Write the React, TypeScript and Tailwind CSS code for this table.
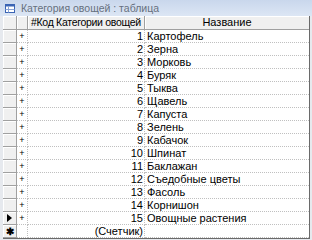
import React from "react";

const rows: [number, string][] = [
  [1, "Картофель"],
  [2, "Зерна"],
  [3, "Морковь"],
  [4, "Буряк"],
  [5, "Тыква"],
  [6, "Щавель"],
  [7, "Капуста"],
  [8, "Зелень"],
  [9, "Кабачок"],
  [10, "Шпинат"],
  [11, "Баклажан"],
  [12, "Съедобные цветы"],
  [13, "Фасоль"],
  [14, "Корнишон"],
  [15, "Овощные растения"],
];

const selector =
  "h-[13px] bg-[#f0f0f0] border-r border-b border-r-[#a0a0a0] border-b-[#a0a0a0] shadow-[inset_1px_1px_0_#ffffff] flex items-center justify-center";
const cell =
  "h-[13px] border-r border-b border-dotted border-[#c0c0c0] bg-white flex items-center whitespace-nowrap";
const head =
  "h-[14px] bg-[#f0f0f0] border-r border-b border-[#a0a0a0] shadow-[inset_1px_1px_0_#ffffff] flex items-center whitespace-nowrap overflow-hidden";

function TableIcon() {
  return (
    <svg width="10" height="9" viewBox="0 0 10 9">
      <rect x="0.5" y="0.5" width="9" height="8" fill="#ffffff" stroke="#3a64b4" />
      <rect x="0.5" y="0.5" width="9" height="2" fill="#3a64b4" />
      <line x1="3.5" y1="2.5" x2="3.5" y2="8.5" stroke="#8aa4d6" />
      <line x1="0.5" y1="5.5" x2="9.5" y2="5.5" stroke="#8aa4d6" />
    </svg>
  );
}

export default function App() {
  return (
    <div
      className="w-[312px] h-[240px] overflow-hidden bg-[#e6e9ee] text-[11px] leading-[13px] text-black"
      style={{ fontFamily: '"Liberation Sans", Arial, sans-serif' }}
    >
      <div className="h-[16px] flex items-center gap-[6px] pl-[5px] bg-gradient-to-b from-[#c9d7ec] to-[#dce6f4]">
        <TableIcon />
        <span className="text-[#66707e] text-[10.5px] whitespace-nowrap">Категория овощей : таблица</span>
      </div>
      <div className="pl-[3px] pr-[2px]">
        <div className="grid grid-cols-[14px_11px_117px_164px] border-r border-b border-[#6a6a6a] w-[307px]">
          <div className={head} />
          <div className={head} />
          <div className={head + " pl-[3px] text-[10.5px] tracking-[-0.3px]"}>#Код Категории овощей</div>
          <div className={head + " border-r-0 justify-center"}>Название</div>
          {rows.map(([id, name]) => (
            <React.Fragment key={id}>
              <div className={selector}>
                {id === 15 && (
                  <svg width="5" height="8" viewBox="0 0 5 8">
                    <polygon points="0,0 5,4 0,8" fill="#000000" />
                  </svg>
                )}
              </div>
              <div className={cell + " justify-center text-[9px]"}>+</div>
              <div className={cell + " justify-end pr-[1px]"}>{id}</div>
              <div className={cell + " pl-[2px] border-r-0"}>{name}</div>
            </React.Fragment>
          ))}
          <div className={selector + " text-[10px] font-bold"}>✱</div>
          <div className={cell} />
          <div className={cell + " justify-end pr-[1px]"}>(Счетчик)</div>
          <div className={cell + " border-r-0"} />
        </div>
      </div>
    </div>
  );
}
